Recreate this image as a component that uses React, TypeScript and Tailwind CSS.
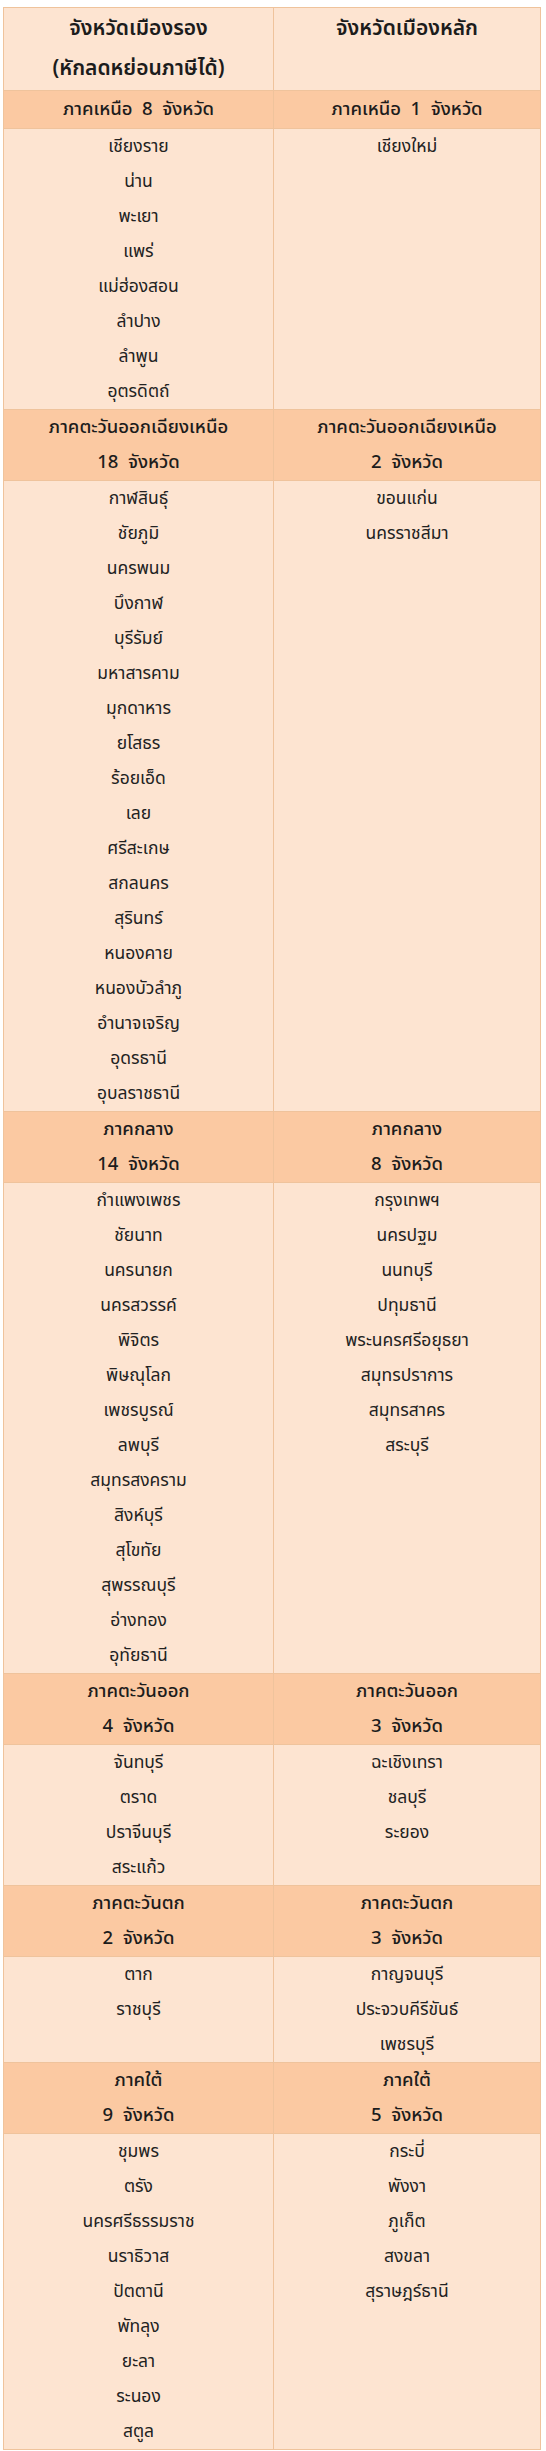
import React from 'react'

type Section = {
  left: string[]
  right: string[]
  leftItems: string[]
  rightItems: string[]
}

const sections: Section[] = [
  {
    left: ['ภาคเหนือ  8  จังหวัด'],
    right: ['ภาคเหนือ  1  จังหวัด'],
    leftItems: ['เชียงราย', 'น่าน', 'พะเยา', 'แพร่', 'แม่ฮ่องสอน', 'ลำปาง', 'ลำพูน', 'อุตรดิตถ์'],
    rightItems: ['เชียงใหม่'],
  },
  {
    left: ['ภาคตะวันออกเฉียงเหนือ', '18  จังหวัด'],
    right: ['ภาคตะวันออกเฉียงเหนือ', '2  จังหวัด'],
    leftItems: [
      'กาฬสินธุ์', 'ชัยภูมิ', 'นครพนม', 'บึงกาฬ', 'บุรีรัมย์', 'มหาสารคาม', 'มุกดาหาร', 'ยโสธร', 'ร้อยเอ็ด',
      'เลย', 'ศรีสะเกษ', 'สกลนคร', 'สุรินทร์', 'หนองคาย', 'หนองบัวลำภู', 'อำนาจเจริญ', 'อุดรธานี', 'อุบลราชธานี',
    ],
    rightItems: ['ขอนแก่น', 'นครราชสีมา'],
  },
  {
    left: ['ภาคกลาง', '14  จังหวัด'],
    right: ['ภาคกลาง', '8  จังหวัด'],
    leftItems: [
      'กำแพงเพชร', 'ชัยนาท', 'นครนายก', 'นครสวรรค์', 'พิจิตร', 'พิษณุโลก', 'เพชรบูรณ์', 'ลพบุรี',
      'สมุทรสงคราม', 'สิงห์บุรี', 'สุโขทัย', 'สุพรรณบุรี', 'อ่างทอง', 'อุทัยธานี',
    ],
    rightItems: ['กรุงเทพฯ', 'นครปฐม', 'นนทบุรี', 'ปทุมธานี', 'พระนครศรีอยุธยา', 'สมุทรปราการ', 'สมุทรสาคร', 'สระบุรี'],
  },
  {
    left: ['ภาคตะวันออก', '4  จังหวัด'],
    right: ['ภาคตะวันออก', '3  จังหวัด'],
    leftItems: ['จันทบุรี', 'ตราด', 'ปราจีนบุรี', 'สระแก้ว'],
    rightItems: ['ฉะเชิงเทรา', 'ชลบุรี', 'ระยอง'],
  },
  {
    left: ['ภาคตะวันตก', '2  จังหวัด'],
    right: ['ภาคตะวันตก', '3  จังหวัด'],
    leftItems: ['ตาก', 'ราชบุรี'],
    rightItems: ['กาญจนบุรี', 'ประจวบคีรีขันธ์', 'เพชรบุรี'],
  },
  {
    left: ['ภาคใต้', '9  จังหวัด'],
    right: ['ภาคใต้', '5  จังหวัด'],
    leftItems: ['ชุมพร', 'ตรัง', 'นครศรีธรรมราช', 'นราธิวาส', 'ปัตตานี', 'พัทลุง', 'ยะลา', 'ระนอง', 'สตูล'],
    rightItems: ['กระบี่', 'พังงา', 'ภูเก็ต', 'สงขลา', 'สุราษฎร์ธานี'],
  },
]

function RegionCell({ lines, divider }: { lines: string[]; divider?: boolean }) {
  return (
    <div className={`flex flex-col items-center justify-center ${divider ? 'border-r border-[#efc39c]' : ''}`}>
      {lines.map((l) => (
        <div
          key={l}
          className={`whitespace-pre text-[18.5px] font-medium text-[#1c1c1c] ${lines.length > 1 ? 'h-[35px] leading-[35px]' : 'h-[37px] leading-[37px]'}`}
        >
          {l}
        </div>
      ))}
    </div>
  )
}

function ItemCell({ items, divider }: { items: string[]; divider?: boolean }) {
  return (
    <div className={`flex flex-col items-center ${divider ? 'border-r border-[#efc39c]' : ''}`}>
      {items.map((it) => (
        <div key={it} className="h-[35px] leading-[35px] text-[17.5px] text-[#222]">
          {it}
        </div>
      ))}
    </div>
  )
}

export default function App() {
  return (
    <div className="min-h-[2451px] bg-white pl-[3px] pt-[7px]" style={{ fontFamily: '"Noto Sans Thai", "Noto Sans", sans-serif' }}>
      <div className="w-[538px] border border-[#efc39c] bg-[#fde4d1]">
        <div className="grid h-[82px] grid-cols-[270px_1fr]">
          <div className="flex flex-col items-center justify-center border-r border-[#efc39c] text-[21px] font-semibold text-[#1c1c1c]">
            <div className="h-[40px] leading-[40px]">จังหวัดเมืองรอง</div>
            <div className="h-[40px] leading-[40px]">(หักลดหย่อนภาษีได้)</div>
          </div>
          <div className="flex flex-col items-center text-[21px] font-semibold text-[#1c1c1c]">
            <div className="h-[41px] leading-[41px]">จังหวัดเมืองหลัก</div>
          </div>
        </div>
        {sections.map((s, i) => (
          <React.Fragment key={i}>
            <div className="grid grid-cols-[270px_1fr] border-y border-[#efc39c] bg-[#fbc9a2]">
              <RegionCell lines={s.left} divider />
              <RegionCell lines={s.right} />
            </div>
            <div className="grid grid-cols-[270px_1fr]">
              <ItemCell items={s.leftItems} divider />
              <ItemCell items={s.rightItems} />
            </div>
          </React.Fragment>
        ))}
      </div>
    </div>
  )
}
